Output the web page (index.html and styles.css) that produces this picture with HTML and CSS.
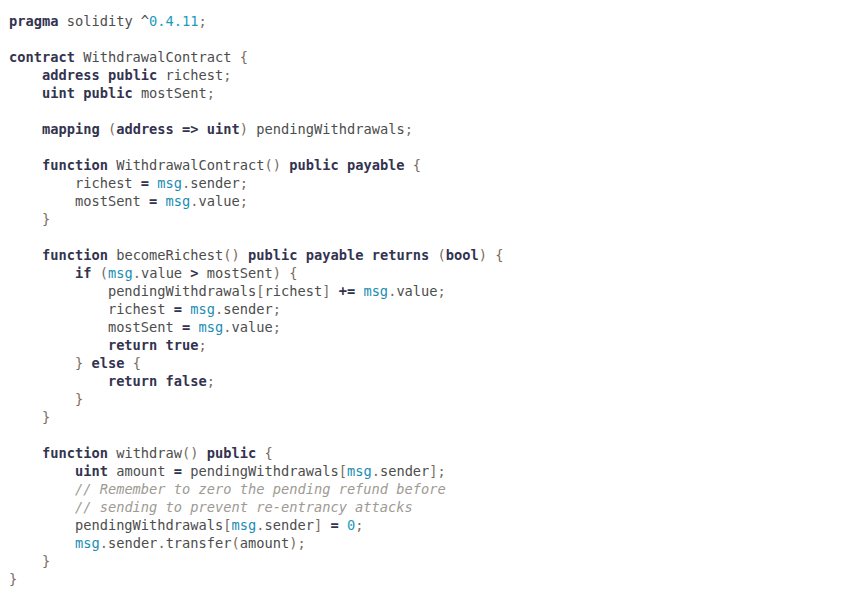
FILE: index.html
```html
<!DOCTYPE html>
<html>
<head>
<meta charset="utf-8">
<link rel="stylesheet" href="styles.css">
</head>
<body>
<pre class="code"><span class="kw">pragma</span> solidity ^<span class="num">0.4.11</span><span class="p">;</span>

<span class="kw">contract</span> WithdrawalContract <span class="p">{</span>
    <span class="kw">address</span> <span class="kw">public</span> richest<span class="p">;</span>
    <span class="kw">uint</span> <span class="kw">public</span> mostSent<span class="p">;</span>

    <span class="kw">mapping</span> <span class="p">(</span><span class="kw">address</span> <span class="kw">=&gt;</span> <span class="kw">uint</span><span class="p">)</span> pendingWithdrawals<span class="p">;</span>

    <span class="kw">function</span> WithdrawalContract<span class="p">()</span> <span class="kw">public</span> <span class="kw">payable</span> <span class="p">{</span>
        richest <span class="kw">=</span> <span class="bi">msg</span><span class="p">.</span>sender<span class="p">;</span>
        mostSent <span class="kw">=</span> <span class="bi">msg</span><span class="p">.</span>value<span class="p">;</span>
    <span class="p">}</span>

    <span class="kw">function</span> becomeRichest<span class="p">()</span> <span class="kw">public</span> <span class="kw">payable</span> <span class="kw">returns</span> <span class="p">(</span><span class="kw">bool</span><span class="p">)</span> <span class="p">{</span>
        <span class="kw">if</span> <span class="p">(</span><span class="bi">msg</span><span class="p">.</span>value <span class="kw">&gt;</span> mostSent<span class="p">)</span> <span class="p">{</span>
            pendingWithdrawals<span class="p">[</span>richest<span class="p">]</span> <span class="kw">+=</span> <span class="bi">msg</span><span class="p">.</span>value<span class="p">;</span>
            richest <span class="kw">=</span> <span class="bi">msg</span><span class="p">.</span>sender<span class="p">;</span>
            mostSent <span class="kw">=</span> <span class="bi">msg</span><span class="p">.</span>value<span class="p">;</span>
            <span class="kw">return</span> <span class="kw">true</span><span class="p">;</span>
        <span class="p">}</span> <span class="kw">else</span> <span class="p">{</span>
            <span class="kw">return</span> <span class="kw">false</span><span class="p">;</span>
        <span class="p">}</span>
    <span class="p">}</span>

    <span class="kw">function</span> withdraw<span class="p">()</span> <span class="kw">public</span> <span class="p">{</span>
        <span class="kw">uint</span> amount <span class="kw">=</span> pendingWithdrawals<span class="p">[</span><span class="bi">msg</span><span class="p">.</span>sender<span class="p">];</span>
        <span class="cm">// Remember to zero the pending refund before</span>
        <span class="cm">// sending to prevent re-entrancy attacks</span>
        pendingWithdrawals<span class="p">[</span><span class="bi">msg</span><span class="p">.</span>sender<span class="p">]</span> <span class="kw">=</span> <span class="num">0</span><span class="p">;</span>
        <span class="bi">msg</span><span class="p">.</span>sender<span class="p">.</span>transfer<span class="p">(</span>amount<span class="p">);</span>
    <span class="p">}</span>
<span class="p">}</span></pre>
</body>
</html>
```
FILE: styles.css
```css
html, body {
  margin: 0;
  padding: 0;
  background: #ffffff;
}

.code {
  margin: 0;
  padding: 12px 0 0 9px;
  font-family: "DejaVu Sans Mono", "Liberation Mono", monospace;
  font-size: 13.7px;
  line-height: 18px;
  color: #4d4d4d;
  white-space: pre;
}

.kw {
  font-weight: bold;
  color: #333350;
}

.num {
  color: #1a9bbd;
}

.bi {
  color: #1a8db3;
}

.p {
  color: #7a6c60;
}

.cm {
  color: #9e9a94;
  font-style: italic;
}
```
